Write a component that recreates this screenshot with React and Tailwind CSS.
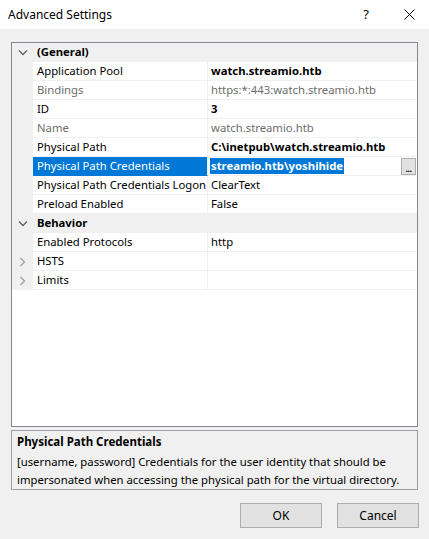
import React from "react";

const font = { fontFamily: '"Noto Sans", "Open Sans", sans-serif' };

function ChevDown() {
  return (
    <svg width="10" height="7" viewBox="0 0 10 7">
      <path d="M1 1.5 L5 5.5 L9 1.5" fill="none" stroke="#606060" strokeWidth="1.3" />
    </svg>
  );
}
function ChevRight() {
  return (
    <svg width="7" height="10" viewBox="0 0 7 10">
      <path d="M1.5 1 L5.5 5 L1.5 9" fill="none" stroke="#a0a0a0" strokeWidth="1.3" />
    </svg>
  );
}

function Category({ label }) {
  return (
    <div className="flex h-[19px] bg-[#f0f0f0] items-center">
      <div className="w-[21px] flex items-center justify-center pl-[1px]">
        <ChevDown />
      </div>
      <div className="pl-[4px] font-bold text-black">{label}</div>
    </div>
  );
}

function Row({ label, value, bold, gray, expand, selected }) {
  return (
    <div className="flex h-[19px]">
      <div className="w-[21px] bg-[#f0f0f0] flex items-center justify-center">
        {expand ? <ChevRight /> : null}
      </div>
      <div
        className={
          "w-[175px] border-r border-b border-[#f0f0f0] flex items-center pl-[4px] whitespace-nowrap overflow-hidden " +
          (selected ? "bg-[#0078d7] text-white border-b-[#0078d7]" : gray ? "text-[#6d6d6d]" : "text-black")
        }
      >
        {label}
      </div>
      <div className="flex-1 border-b border-[#f0f0f0] flex items-center pl-[2px] pr-[1px] whitespace-nowrap">
        {selected ? (
          <>
            <span className="bg-[#0078d7] text-white font-bold leading-[16px] px-[1px]">{value}</span>
            <div className="flex-1" />
            <div className="w-[15px] h-[17px] bg-[#e1e1e1] border border-[#adadad] flex items-end justify-center pb-[2px]">
              <span className="text-[9px] leading-[7px] tracking-[-0.5px] font-bold text-black">...</span>
            </div>
          </>
        ) : (
          <span
            className={
              "pl-[1px] " + (bold ? "font-bold text-black" : gray ? "text-[#6d6d6d]" : "text-black")
            }
          >
            {value}
          </span>
        )}
      </div>
    </div>
  );
}

export default function App() {
  return (
    <div className="w-[429px] h-[539px] bg-[#f0f0f0] flex flex-col text-[11.3px] text-black" style={font}>
      <div className="h-[29px] bg-white flex items-center pl-[8px] shrink-0">
        <div className="flex-1 text-[12px] text-black">Advanced Settings</div>
        <div className="w-[20px] text-center text-[13px] mr-[28px]">?</div>
        <svg width="11" height="11" viewBox="0 0 11 11" className="mr-[14px]">
          <path d="M0.5 0.5 L10.5 10.5 M10.5 0.5 L0.5 10.5" stroke="#000" strokeWidth="1" />
        </svg>
      </div>
      <div className="px-[11px] pt-[13px] flex flex-col">
        <div className="h-[385px] border border-[#828790] bg-white flex flex-col">
          <Category label="(General)" />
          <Row label="Application Pool" value="watch.streamio.htb" bold />
          <Row label="Bindings" value="https:*:443:watch.streamio.htb" gray />
          <Row label="ID" value="3" bold />
          <Row label="Name" value="watch.streamio.htb" gray />
          <Row label="Physical Path" value="C:\inetpub\watch.streamio.htb" bold />
          <Row label="Physical Path Credentials" value="streamio.htb\yoshihide" selected />
          <Row label="Physical Path Credentials Logon" value="ClearText" />
          <Row label="Preload Enabled" value="False" />
          <Category label="Behavior" />
          <Row label="Enabled Protocols" value="http" />
          <Row label="HSTS" value="" expand />
          <Row label="Limits" value="" expand />
        </div>
        <div className="mt-[3px] h-[60px] border border-[#a0a0a0] bg-[#f0f0f0] px-[5px] pt-[1px] flex flex-col">
          <div className="font-bold leading-[18px] mt-[1px] text-[11.5px]">Physical Path Credentials</div>
          <div className="leading-[18px] mt-[2px]">
            [username, password] Credentials for the user identity that should be impersonated when accessing the
            physical path for the virtual directory.
          </div>
        </div>
        <div className="flex justify-end gap-[15px] mt-[13px] mr-[-1px]">
          <button className="w-[82px] h-[25px] bg-[#e1e1e1] border border-[#adadad] text-[12px]">OK</button>
          <button className="w-[82px] h-[25px] bg-[#e1e1e1] border border-[#adadad] text-[12px]">Cancel</button>
        </div>
      </div>
    </div>
  );
}
